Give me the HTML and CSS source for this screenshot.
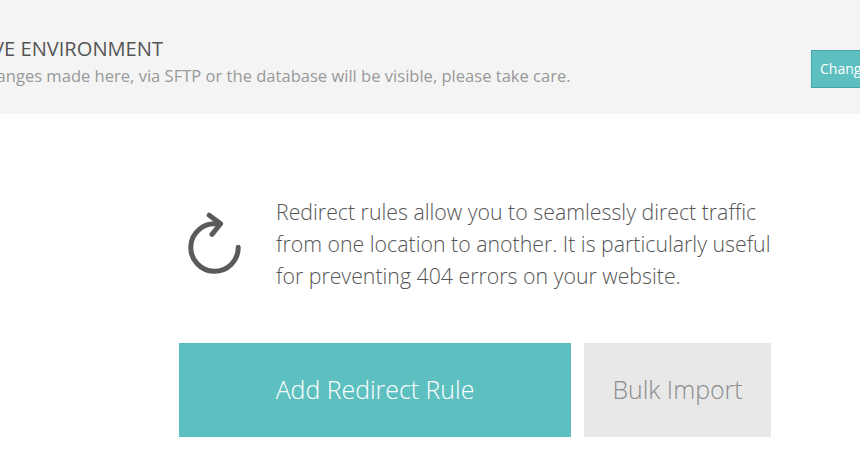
FILE: index.html
```html
<!DOCTYPE html>
<html lang="en">
<head>
  <meta charset="UTF-8" />
  <title>Redirect Rules</title>
  <link rel="stylesheet" href="styles.css">
</head>

<body>
  <header class="environment">
    <div class="environment-text">
      <h1>LIVE ENVIRONMENT</h1>
      <p>Changes made here, via SFTP or the database will be visible, please take care.</p>
    </div>
    <button class="change-button">Change</button>
  </header>

  <main class="container">
    <div class="intro">
      <svg class="redirect-icon" viewBox="0 0 56 64" aria-hidden="true">
        <path d="M30 12A23.7 23.7 0 1 0 51.2 35.2" />
        <path d="M22.2 3.2L33.6 11.7L25 22.4" />
      </svg>
      <p>Redirect rules allow you to seamlessly direct traffic from one location to another. It is particularly useful for preventing 404 errors on your website.</p>
    </div>

    <div class="actions">
      <button class="button add-rule">Add Redirect Rule</button>
      <button class="button bulk-import">Bulk Import</button>
    </div>
  </main>
</body>
</html>
```

FILE: styles.css
```css
body {
  background: #fff;
  color: #555;
  font-family: 'Open Sans', sans-serif;
  margin: 0;
  overflow: hidden;
}

.environment {
  background: #f4f4f4;
  display: flex;
  justify-content: space-between;
  box-sizing: border-box;
  height: 114px;
  padding-top: 35px;
}

.environment-text {
  margin-left: -24px;
  white-space: nowrap;
}

.environment h1 {
  font-size: 20.1px;
  font-weight: 400;
  line-height: 28px;
  margin: 0;
}

.environment p {
  color: #999;
  font-size: 16.56px;
  line-height: 26px;
  margin: 0;
}

.change-button {
  background: #5dbfc0;
  color: #fff;
  border: 1px solid #43a5a6;
  box-sizing: border-box;
  width: 72px;
  height: 38px;
  margin: 15px -23px 0 0;
  padding: 0 8px 2px;
  font-family: inherit;
  font-size: 14px;
  text-align: left;
}

.container {
  width: 592px;
  margin-left: 179px;
  padding-top: 82px;
}

.intro {
  display: flex;
}

.redirect-icon {
  flex: none;
  width: 56px;
  height: 64px;
  margin: 16px 33px 0 8px;
  fill: none;
  stroke: #5a5a5a;
  stroke-width: 5;
  stroke-linecap: round;
  stroke-linejoin: round;
}

.intro p {
  font-size: 21.3px;
  font-weight: 300;
  line-height: 32px;
  margin: 0 -10px 0 0;
}

.actions {
  display: flex;
  gap: 13px;
  margin-top: 51px;
}

.button {
  height: 94px;
  border: none;
  padding: 0 0 3px;
  font-family: inherit;
  font-size: 24.9px;
  font-weight: 300;
}

.add-rule {
  background: #5dbfc0;
  color: #fff;
  width: 392px;
}

.bulk-import {
  background: #e8e8e8;
  color: #8c8c8c;
  width: 187px;
}
```
